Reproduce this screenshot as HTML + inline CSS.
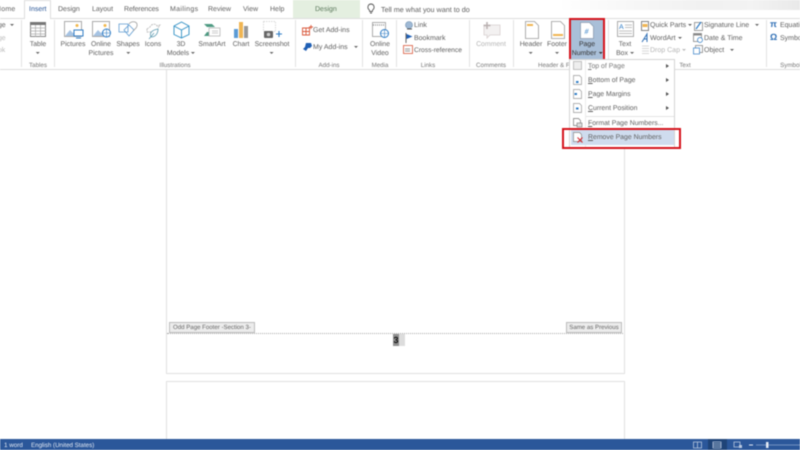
<!DOCTYPE html>
<html><head><meta charset="utf-8"><style>
html,body{margin:0;padding:0;width:800px;height:450px;overflow:hidden;background:#fff}
#r{position:relative;width:800px;height:450px;overflow:hidden;font-family:"Liberation Sans",sans-serif;color:#5f5f5f;background:#fff;filter:blur(.4px);text-rendering:geometricPrecision}
.t{position:absolute;font-size:7px;line-height:9px;white-space:nowrap}
.c{position:absolute;font-size:6.9px;line-height:9px;text-align:center;white-space:nowrap;transform:translateX(-50%)}
.g{color:#777;font-size:6.2px}
.b{position:absolute}
svg{position:absolute;overflow:visible}
i{display:inline-block;width:0;height:0;border-left:2px solid transparent;border-right:2px solid transparent;border-top:2px solid #666;vertical-align:middle;margin-left:2px}
</style></head><body><div id="r">

<!-- top right texture -->
<div class="b" style="left:560px;top:0;width:240px;height:10px;background:linear-gradient(90deg,#fff,#f7f7f7 30%,#f1f1f1 60%,#f3f3f3 80%,#e9e9e9)"></div>

<!-- tabs -->
<div class="b" style="left:24px;top:0;width:27px;height:19px;border:1px solid #ddd;border-bottom:0;box-sizing:border-box;background:#fff;z-index:1"></div>
<div class="b" style="left:293px;top:0;width:67px;height:18px;background:#e4efe0"></div>
<div class="t" style="left:-4px;top:4.500px;letter-spacing:.2px">Home</div>
<div class="t" style="left:29px;top:4.500px;color:#2b5797;z-index:2">Insert</div>
<div class="t" style="left:58px;top:4.500px">Design</div>
<div class="t" style="left:92px;top:4.500px">Layout</div>
<div class="t" style="left:124px;top:4.500px;letter-spacing:-.1px">References</div>
<div class="t" style="left:170px;top:4.500px;letter-spacing:.35px">Mailings</div>
<div class="t" style="left:208px;top:4.500px">Review</div>
<div class="t" style="left:243px;top:4.500px">View</div>
<div class="t" style="left:270px;top:4.500px">Help</div>
<div class="t" style="left:315px;top:4.500px;color:#5d7a5d">Design</div>
<svg style="left:366px;top:3px" width="10" height="12" viewBox="0 0 10 12"><path d="M5 1a3.200 3.200 0 0 0-2 5.600c.5.500.6 1 .7 1.900h2.600c.1-.9.2-1.400.7-1.900A3.200 3.200 0 0 0 5 1zM4 10h2" fill="none" stroke="#555" stroke-width=".9"/></svg>
<div class="t" style="left:381px;top:4.500px;font-size:7.2px">Tell me what you want to do</div>

<!-- ribbon -->
<div class="b" style="left:0;top:18px;width:800px;height:1px;background:#ddd"></div>
<div class="b" style="left:0;top:69px;width:800px;height:1px;background:#dcdcdc"></div>
<!-- separators -->
<div class="b" style="left:21px;top:20px;width:1px;height:47px;background:#e2e2e2"></div>
<div class="b" style="left:54px;top:20px;width:1px;height:47px;background:#e2e2e2"></div>
<div class="b" style="left:295px;top:20px;width:1px;height:47px;background:#e2e2e2"></div>
<div class="b" style="left:362px;top:20px;width:1px;height:47px;background:#e2e2e2"></div>
<div class="b" style="left:396px;top:20px;width:1px;height:47px;background:#e2e2e2"></div>
<div class="b" style="left:469px;top:20px;width:1px;height:47px;background:#e2e2e2"></div>
<div class="b" style="left:513px;top:20px;width:1px;height:47px;background:#e2e2e2"></div>
<div class="b" style="left:608px;top:20px;width:1px;height:47px;background:#e2e2e2"></div>
<div class="b" style="left:766px;top:20px;width:1px;height:47px;background:#e2e2e2"></div>

<!-- left clipped -->
<div class="t" style="left:-6px;top:21px">age <i></i></div>
<div class="t" style="left:-6px;top:33.500px;color:#bbb">age</div>
<div class="t" style="left:-6px;top:46px;color:#bbb">ook</div>

<!-- Table -->
<svg style="left:30px;top:22px" width="16" height="15" viewBox="0 0 16 15"><rect x=".5" y=".5" width="15" height="14" fill="#fff" stroke="#888"/><rect x="0" y="0" width="16" height="3" fill="#777"/><path d="M0 6h16M0 9h16M0 12h16M5.500 3v12M10.500 3v12" stroke="#aaa" stroke-width=".7"/></svg>
<div class="c" style="left:38px;top:40px">Table<br><i style="margin:0"></i></div>
<div class="c g" style="left:38px;top:60.500px">Tables</div>

<!-- Pictures -->
<svg style="left:64px;top:21px" width="20" height="18" viewBox="0 0 20 18"><rect x=".5" y=".5" width="17" height="15" fill="#fff" stroke="#aaa"/><circle cx="13" cy="4.500" r="1.500" fill="#f2b84b"/><path d="M1 15l5-6 3 3 2-1.500 3 4.500z" fill="#a6c3e3"/><rect x="10" y="9" width="9" height="6" fill="#fff" stroke="#2f7cc5"/><path d="M12 17h5" stroke="#2f7cc5"/></svg>
<div class="c" style="left:73px;top:40px">Pictures</div>
<svg style="left:92px;top:21px" width="20" height="18" viewBox="0 0 20 18"><rect x=".5" y=".5" width="17" height="15" fill="#fff" stroke="#aaa"/><circle cx="13" cy="4.500" r="1.500" fill="#f2b84b"/><path d="M1 15l5-6 3 3 2-1.500 3 4.500z" fill="#a6c3e3"/><circle cx="14.500" cy="12" r="4" fill="#fff" stroke="#2f7cc5"/><path d="M10.500 12h8M14.500 8v8" stroke="#2f7cc5" stroke-width=".6"/></svg>
<div class="c" style="left:101px;top:40px">Online<br>Pictures</div>
<!-- Shapes -->
<svg style="left:118px;top:20px" width="20" height="19" viewBox="0 0 20 19"><path d="M1 4h9v8H1zM11 5l5 5-5 6-5-6z" fill="#fff" stroke="#5e9bd1" stroke-width=".8"/><path d="M11 4c2-3 7-3 8 0s-2 5-4 7" fill="none" stroke="#999" stroke-width=".8"/></svg>
<div class="c" style="left:128px;top:40px">Shapes<br><i style="margin:0"></i></div>
<!-- Icons -->
<svg style="left:144px;top:21px" width="18" height="18" viewBox="0 0 18 18"><path d="M3 8l3-2c1-3 6-4 7-1l3-1-2 3c0 3-2 4-5 4H3z" fill="#fff" stroke="#aaa" stroke-width=".7" stroke-dasharray="2 .8"/><path d="M7 16c-2-4 1-7 7-8 0 5-3 8-7 8zM5 18l5-6" fill="#fff" stroke="#5e9bb1" stroke-width=".8"/></svg>
<div class="c" style="left:153px;top:40px">Icons</div>
<!-- 3D -->
<svg style="left:173px;top:21px" width="17" height="18" viewBox="0 0 17 18"><path d="M8.500 1L16 5v8.500L8.500 17 1 13.500V5zM1 5l7.500 4L16 5M8.500 9v8" fill="#fff" stroke="#2f8fc4" stroke-width=".9"/></svg>
<div class="c" style="left:181px;top:40px">3D<br>Models<i></i></div>
<!-- SmartArt -->
<svg style="left:203px;top:23px" width="18" height="15" viewBox="0 0 18 15"><path d="M1 1h8l3 3H4z" fill="#4e9a82"/><path d="M1 13h8l3-4H4z" fill="#4e9a82"/><rect x="6" y="5" width="11" height="8" fill="#fff" stroke="#aaa" stroke-width=".7"/><path d="M9 8h6M9 10h6" stroke="#bbb" stroke-width=".7"/></svg>
<div class="c" style="left:212px;top:40px">SmartArt</div>
<!-- Chart -->
<svg style="left:233px;top:21px" width="16" height="18" viewBox="0 0 16 18"><rect x="1" y="8" width="4" height="9" fill="#5b9bd5"/><rect x="6" y="1" width="4" height="16" fill="#f0b552"/><rect x="11" y="5" width="4" height="12" fill="#999"/></svg>
<div class="c" style="left:241px;top:40px">Chart</div>
<!-- Screenshot -->
<svg style="left:263px;top:21px" width="20" height="18" viewBox="0 0 20 18"><rect x=".5" y=".5" width="12" height="10" fill="#fff" stroke="#ccc" stroke-width=".7" stroke-dasharray="1.500 1"/><rect x="1" y="10" width="9" height="7" rx="1" fill="#666"/><circle cx="5.500" cy="13.500" r="1.800" fill="#ccc"/><path d="M13 13h6M16 10v6" stroke="#2f7cc5" stroke-width="1.100"/></svg>
<div class="c" style="left:272px;top:40px">Screenshot<br><i style="margin:0"></i></div>
<div class="c g" style="left:175px;top:60.500px">Illustrations</div>

<!-- Add-ins -->
<svg style="left:302px;top:25px" width="11" height="11" viewBox="0 0 11 11"><path d="M.5 3h7v7h-7zM.5 6.500h7M4 3v7M9 0v4M7 2h4" fill="none" stroke="#d9583b" stroke-width=".9"/></svg>
<div class="t" style="left:313px;top:26px">Get Add-ins</div>
<svg style="left:302px;top:42px" width="11" height="10" viewBox="0 0 11 10"><path d="M4 1h5l1 3-2 2H6L4 9 1 7l2-2z" fill="#1f5fb4"/></svg>
<div class="t" style="left:313px;top:43px">My Add-ins <i style="margin-left:4px"></i></div>
<div class="c g" style="left:329px;top:60.500px">Add-ins</div>

<!-- Media -->
<svg style="left:372px;top:22px" width="17" height="17" viewBox="0 0 17 17"><rect x=".5" y=".5" width="13" height="14" fill="#fff" stroke="#999" stroke-width=".8"/><path d="M1 3h12" stroke="#888" stroke-width="1.200" stroke-dasharray="1 1"/><circle cx="12.500" cy="11.500" r="4" fill="#fff" stroke="#2f7cc5"/><path d="M8.500 11.500h8M12.500 7.500v8" stroke="#2f7cc5" stroke-width=".6"/></svg>
<div class="c" style="left:380px;top:40px">Online<br>Video</div>
<div class="c g" style="left:380px;top:60.500px">Media</div>

<!-- Links -->
<svg style="left:404px;top:21px" width="10" height="10" viewBox="0 0 10 10"><circle cx="5" cy="4" r="3.500" fill="#9fb9d5" stroke="#6f8fae" stroke-width=".6"/><path d="M3 8h5" stroke="#555"/></svg>
<div class="t" style="left:414px;top:21px">Link</div>
<svg style="left:405px;top:33px" width="8" height="10" viewBox="0 0 8 10"><path d="M1 0v10" stroke="#666"/><path d="M1.500 1l6 2.500-6 2.500z" fill="#1f5fb4"/></svg>
<div class="t" style="left:414px;top:33.500px">Bookmark</div>
<svg style="left:403px;top:45px" width="11" height="10" viewBox="0 0 11 10"><rect x=".5" y=".5" width="9" height="8" fill="#fff" stroke="#d9583b" stroke-width=".8"/><path d="M2 4h5M2 6h5" stroke="#777" stroke-width=".7"/></svg>
<div class="t" style="left:414px;top:46px;font-size:6.700px">Cross-reference</div>
<div class="c g" style="left:428px;top:60.500px">Links</div>

<!-- Comments -->
<svg style="left:481px;top:21px" width="20" height="18" viewBox="0 0 20 18"><path d="M3 4h16v10H9l-3 3v-3H3z" fill="#f3f1f1" stroke="#d8d0d0" stroke-width=".8"/><path d="M6 1v7M2.500 4.500h7" stroke="#b9b0b0" stroke-width="1.500"/></svg>
<div class="c" style="left:491px;top:40px;color:#b5b5b5">Comment</div>
<div class="c g" style="left:491px;top:60.500px">Comments</div>

<!-- Header -->
<svg style="left:525px;top:21px" width="14" height="18" viewBox="0 0 14 18"><path d="M.5.500h9l4 4v13H.5z" fill="#fff" stroke="#999" stroke-width=".8"/><rect x="2" y="3" width="6" height="2" fill="#f0b552"/></svg>
<div class="c" style="left:531px;top:40px">Header<br><i style="margin:0"></i></div>
<svg style="left:551px;top:21px" width="14" height="18" viewBox="0 0 14 18"><path d="M.5.500h9l4 4v13H.5z" fill="#fff" stroke="#999" stroke-width=".8"/><rect x="2" y="13" width="10" height="2" fill="#f0b552"/></svg>
<div class="c" style="left:557px;top:40px">Footer<br><i style="margin:0"></i></div>
<div class="t g" style="left:538px;top:60.500px">Header &amp; F</div>

<!-- Page number -->
<div class="b" style="left:570px;top:19px;width:34px;height:41px;background:#a9bfd8"></div>
<svg style="left:580px;top:22px" width="14" height="17" viewBox="0 0 14 17"><path d="M.5.500h9l4 4v12H.5z" fill="#fff" stroke="#8a9bb0" stroke-width=".8"/><text x="4.500" y="12" font-family="Liberation Serif" font-size="8" font-style="italic" fill="#2f7cc5">#</text></svg>
<div class="c" style="left:587px;top:40px;color:#333">Page<br>Number<i style="border-top-color:#333"></i></div>
<div class="b" style="left:569px;top:18px;width:36px;height:45px;border:2.500px solid #d6141c;box-sizing:border-box"></div>

<!-- Text -->
<svg style="left:617px;top:21px" width="17" height="17" viewBox="0 0 17 17"><rect x=".5" y=".5" width="16" height="15" fill="#fff" stroke="#999" stroke-width=".8"/><text x="2" y="8" font-family="Liberation Sans" font-size="7" fill="#2f7cc5">A</text><path d="M8 4h7M8 6.500h7M2 10h13M2 12.500h13" stroke="#aaa" stroke-width=".7"/></svg>
<div class="c" style="left:625px;top:40px">Text<br>Box<i></i></div>
<svg style="left:641px;top:21px" width="9" height="10" viewBox="0 0 9 10"><rect x=".5" y=".5" width="7" height="9" fill="#fff" stroke="#666" stroke-width=".8"/><rect x="1.500" y="3" width="5" height="3" fill="#f0b552"/></svg>
<div class="t" style="left:650px;top:21px">Quick Parts<i></i></div>
<svg style="left:641px;top:33px" width="9" height="10" viewBox="0 0 9 10"><path d="M1 9l5-8v8M3 6h3" fill="none" stroke="#2f6fb5" stroke-width="1"/></svg>
<div class="t" style="left:650px;top:33.500px">WordArt<i></i></div>
<svg style="left:641px;top:45px" width="9" height="10" viewBox="0 0 9 10"><path d="M1 1h7M1 3.500h7M1 6h7M1 8.500h7" stroke="#ccc" stroke-width=".8"/></svg>
<div class="t" style="left:650px;top:46px;color:#b5b5b5">Drop Cap<i style="border-top-color:#bbb"></i></div>
<svg style="left:694px;top:21px" width="9" height="10" viewBox="0 0 9 10"><rect x=".5" y="1.500" width="8" height="8" fill="#fff" stroke="#777" stroke-width=".7"/><path d="M2 8l5-7" stroke="#2f7cc5" stroke-width="1.200"/></svg>
<div class="t" style="left:704px;top:21px">Signature Line<i style="margin-left:6px"></i></div>
<svg style="left:693px;top:33px" width="10" height="10" viewBox="0 0 10 10"><rect x=".5" y=".5" width="8" height="8" fill="#fff" stroke="#777" stroke-width=".7"/><rect x=".5" y=".5" width="8" height="2" fill="#888"/><circle cx="7" cy="7" r="2.500" fill="#fff" stroke="#2f7cc5" stroke-width=".7"/></svg>
<div class="t" style="left:704px;top:33.500px">Date &amp; Time</div>
<svg style="left:693px;top:45px" width="10" height="10" viewBox="0 0 10 10"><rect x="2.500" y=".5" width="7" height="7" fill="#fff" stroke="#777" stroke-width=".7"/><rect x=".5" y="3" width="6" height="6" fill="#fff" stroke="#2f7cc5" stroke-width=".7"/></svg>
<div class="t" style="left:704px;top:46px">Object<i style="margin-left:6px"></i></div>
<div class="c g" style="left:685px;top:60.500px">Text</div>

<!-- Symbols -->
<div class="t" style="left:770px;top:20px;color:#2f6fb5;font-size:9px;font-weight:bold">π</div>
<div class="t" style="left:780px;top:21px">Equation</div>
<div class="t" style="left:770px;top:33px;color:#2f6fb5;font-size:9px;font-weight:bold">Ω</div>
<div class="t" style="left:780px;top:33.500px">Symbol</div>
<div class="c g" style="left:792px;top:60.500px">Symbols</div>

<!-- document -->
<div class="b" style="left:166px;top:70px;width:459px;height:304px;border:1px solid #e0e0e0;border-top:0;box-sizing:border-box;background:#fff"></div>
<div class="b" style="left:166px;top:381px;width:459px;height:70px;border:1px solid #e0e0e0;border-bottom:0;box-sizing:border-box;background:#fff"></div>
<div class="b" style="left:167px;top:333px;width:456px;border-top:1px dotted #aaa"></div>
<div class="b" style="left:169px;top:322px;width:86px;height:11px;background:#ececec;border:1px solid #bcbcbc;box-sizing:border-box;font-size:6.100px;line-height:9.500px;text-align:center;color:#666;white-space:nowrap">Odd Page Footer -Section 3-</div>
<div class="b" style="left:566px;top:322px;width:56px;height:11px;background:#ececec;border:1px solid #bcbcbc;box-sizing:border-box;font-size:6.100px;line-height:9.500px;text-align:center;color:#666;white-space:nowrap">Same as Previous</div>
<div class="b" style="left:393px;top:334px;width:12px;height:12px;background:#dcdcdc"></div>
<div class="b" style="left:393px;top:334px;width:6px;height:12px;background:#8f8f8f;color:#111;font-size:9px;line-height:12px;font-weight:bold;text-align:center">3</div>

<!-- dropdown -->
<div class="b" style="left:569px;top:59px;width:106px;height:90px;background:#fff;border:1px solid #d4d4d4;box-sizing:border-box"></div>
<div class="b" style="left:585px;top:60px;width:1px;height:88px;background:#ececec"></div>
<div class="b" style="left:586px;top:116px;width:88px;height:1px;background:#e3e3e3"></div>
<div class="b" style="left:571px;top:130px;width:103px;height:15px;background:#cfdcee"></div>
<svg style="left:573px;top:61px" width="9" height="9" viewBox="0 0 9 9"><rect x=".5" y=".5" width="8" height="8" fill="#eee" stroke="#aaa" stroke-width=".7"/></svg>
<svg style="left:573px;top:75px" width="9" height="10" viewBox="0 0 9 10"><path d="M.5.500h6l2 2v7h-8z" fill="#fff" stroke="#999" stroke-width=".7"/><rect x="3" y="6" width="2.500" height="2" fill="#2f7cc5"/></svg>
<svg style="left:573px;top:89px" width="9" height="10" viewBox="0 0 9 10"><path d="M.5.500h6l2 2v7h-8z" fill="#fff" stroke="#999" stroke-width=".7"/><rect x="1.500" y="4" width="2.500" height="2" fill="#2f7cc5"/></svg>
<svg style="left:573px;top:103px" width="9" height="10" viewBox="0 0 9 10"><path d="M.5.500h6l2 2v7h-8z" fill="#fff" stroke="#999" stroke-width=".7"/><rect x="3" y="4.500" width="2.500" height="2" fill="#2f7cc5"/></svg>
<svg style="left:573px;top:118px" width="10" height="10" viewBox="0 0 10 10"><path d="M.5.500h5l2 2v5h-7z" fill="#fff" stroke="#777" stroke-width=".7"/><rect x="4" y="5" width="5" height="4" fill="#ddd" stroke="#777" stroke-width=".6"/></svg>
<svg style="left:573px;top:132px" width="11" height="11" viewBox="0 0 11 11"><path d="M.5.500h6l2 2v7h-8z" fill="#fff" stroke="#888" stroke-width=".7"/><path d="M4.500 5.500l5 5M9.500 5.500l-5 5" stroke="#d6242c" stroke-width="1"/></svg>
<div class="t" style="left:588px;top:62px;font-size:6.900px;color:#777"><u>T</u>op of Page</div>
<div class="t" style="left:588px;top:76px;font-size:6.900px"><u>B</u>ottom of Page</div>
<div class="t" style="left:588px;top:90px;font-size:6.900px"><u>P</u>age Margins</div>
<div class="t" style="left:588px;top:104px;font-size:6.900px"><u>C</u>urrent Position</div>
<div class="t" style="left:588px;top:119px;font-size:6.900px"><u>F</u>ormat Page Numbers...</div>
<div class="t" style="left:588px;top:133px;font-size:6.900px"><u>R</u>emove Page Numbers</div>
<svg style="left:666px;top:64px" width="3" height="48" viewBox="0 0 3 48"><path d="M0 0l3 2-3 2zM0 14l3 2-3 2zM0 28l3 2-3 2zM0 42l3 2-3 2z" fill="#555"/></svg>
<div class="b" style="left:562px;top:128px;width:119px;height:21px;border:2.500px solid #d6141c;box-sizing:border-box"></div>

<!-- status bar -->
<div class="b" style="left:0;top:438.500px;width:800px;height:11.500px;background:#2b579a"></div>
<div class="t" style="left:4px;top:441px;color:#e4ebf5;font-size:6.300px">1 word</div>
<div class="t" style="left:31px;top:441px;color:#e4ebf5;font-size:6.200px">English (United States)</div>
<div class="b" style="left:708px;top:439px;width:19px;height:11px;background:#1f4478"></div>
<svg style="left:693px;top:441px" width="107" height="8" viewBox="0 0 107 8"><path d="M.5 1h4v6h-4zM4.500 1h4v6h-4z" fill="none" stroke="#b9c9e0" stroke-width=".8"/><path d="M20 1h8v6h-8zM20 3h8M20 5h8" fill="none" stroke="#b9c9e0" stroke-width=".8"/><path d="M41 1h6v5h-6z" fill="none" stroke="#b9c9e0" stroke-width=".8"/><rect x="46" y="4" width="3" height="3" fill="#b9c9e0"/><path d="M56 4h4" stroke="#e4ebf5" stroke-width="1"/><path d="M63 4h44" stroke="#8ea6cc" stroke-width=".8"/><rect x="73" y="1" width="2.500" height="6" fill="#e4ebf5"/></svg>

</div></body></html>
